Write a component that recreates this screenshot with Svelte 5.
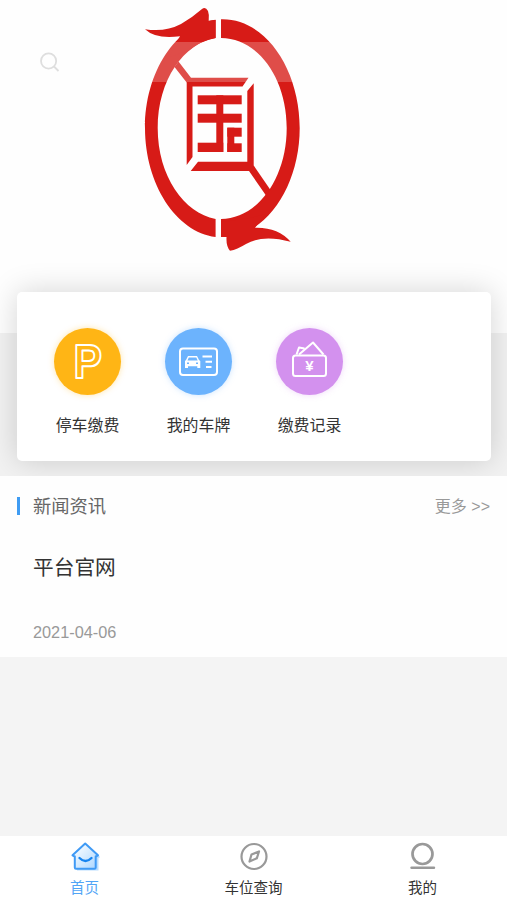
<script lang="ts">
  type Entry = { id: string; label: string; color: string };

  const entries: Entry[] = [
    { id: 'pay', label: '停车缴费', color: '#ffb515' },
    { id: 'plate', label: '我的车牌', color: '#6cb3fd' },
    { id: 'record', label: '缴费记录', color: '#d391ee' },
  ];

  const news = [{ title: '平台官网', date: '2021-04-06' }];

  const tabs = [
    { id: 'home', label: '首页' },
    { id: 'search', label: '车位查询' },
    { id: 'mine', label: '我的' },
  ];

  let active = $state('home');
</script>

<div class="page">
  <header class="banner">
    <svg class="logo" viewBox="140 0 165 260" width="165" height="260" fill="#d71b17">
      <!-- ring, split by a narrow gap -->
      <path d="M215.600 19.800C176 25 145 72 145 128S176 232 215.600 237V219C184 213 157.700 176 157.700 128S184 43 215.600 38Z" />
      <path d="M221 19.300C266 18 299.700 70 299.700 128S266 238 221 237V219C257 219 286.700 179 286.700 128S257 38 221 38Z" />
      <!-- head and tail -->
      <path d="M145 29.200Q165 32.500 181 24Q193 17 202 9Q205.500 6.500 208 11Q209.500 15 208.700 20.800L215.600 20V38Q200 41 188 51L169 57L180 36.200Q156 39.500 145 29.200Z" />
      <path d="M221 222L250 218L266 214L255 227.700Q278 227 290.700 241.800Q263 234 246 244Q237 249.500 230 250.800Q226 246 226.500 237H221Z" />
      <!-- frame -->
      <path d="M178.500 61.500L191 77.700H248.500L242.500 86.500H192.500V157L186.700 165V82.500L174.500 67Z" />
      <path d="M253.700 83.300V165.500L270.500 190L266 195.500L249 171H190.700L198 161.700H247.300V91Z" />
      <!-- inner mark -->
      <rect x="197.700" y="95.300" width="44" height="9" />
      <rect x="197.700" y="113.700" width="44" height="9" />
      <rect x="216.300" y="95.300" width="7" height="56.700" />
      <rect x="197.700" y="142.700" width="25.600" height="9.300" />
      <rect x="227.300" y="127.700" width="7" height="24.300" />
      <rect x="227.300" y="127.700" width="14.400" height="9" />
      <rect x="227.300" y="143.300" width="14.400" height="8.700" />
    </svg>
    <div class="search">
      <svg viewBox="0 0 20 20" width="20" height="20" fill="none" stroke="#dedede" stroke-width="1.800">
        <circle cx="8.600" cy="9" r="7.600" />
        <path d="M14 14.500L18.500 19" />
      </svg>
    </div>
  </header>

  <section class="services">
    <div class="card">
      {#each entries as entry}
        <div class="entry">
          <div class="disc {entry.id}" style="background: {entry.color}">
            <svg viewBox="0 0 67 67" width="67" height="67" fill="none" stroke="#fff" stroke-width="2" stroke-linejoin="round">
              {#if entry.id === 'pay'}
                <text class="parking" x="19.500" y="50.300" textLength="28.500" lengthAdjust="spacingAndGlyphs">P</text>
              {:else if entry.id === 'plate'}
                <rect x="15" y="20.500" width="37" height="26.500" rx="3" />
                <path fill="#fff" stroke="none" fill-rule="evenodd" d="M23 28H32L34 32L35.300 33V40H32.300V38.300H23V40H20V33L21 32ZM23.800 29.500L22.500 32.500H32.700L31.300 29.500ZM22 34.500V36H24V34.500ZM31 34.500V36H33V34.500Z" />
                <path d="M37.500 28.500H47M40.500 33.800H47M41 39H46.500" />
              {:else}
                <rect x="17" y="27.500" width="33" height="20.500" rx="2.500" />
                <path d="M23 26.500L37 14.500L47.500 26.500M20.500 26.500L23 19.500L28.500 20.500" />
                <text class="yen" x="33.500" y="42.500">¥</text>
              {/if}
            </svg>
          </div>
          <span class="entry-label">{entry.label}</span>
        </div>
      {/each}
    </div>
  </section>

  <section class="news">
    <div class="news-head">
      <h2>新闻资讯</h2>
      <span class="more">更多 &gt;&gt;</span>
    </div>
    {#each news as item}
      <article>
        <h3>{item.title}</h3>
        <time>{item.date}</time>
      </article>
    {/each}
  </section>

  <nav class="tabbar">
    {#each tabs as tab}
      <button class:active={active === tab.id} onclick={() => (active = tab.id)}>
        <svg viewBox="0 0 30 30" width="30" height="30" fill="none" stroke="#999" stroke-width="2.200" stroke-linejoin="round" stroke-linecap="round">
          {#if tab.id === 'home'}
            <path d="M6 14.500L17 6L29.500 15V17H28.500V29.500H7Z" fill="#b9ddff" stroke="none" />
            <path d="M15.200 2.500L2.500 14.300L4.800 15.500V26.500Q4.800 27.800 6 27.800H24.500Q25.700 27.800 25.700 26.500V15.500L28 14.300Z" fill="url(#roof)" stroke="#3f9af5" stroke-width="2" />
            <path d="M9.500 17Q15.500 23 21.500 17" stroke="#1684f0" stroke-width="2.400" />
            <defs>
              <linearGradient id="roof" x1="0" y1="0" x2="1" y2="1">
                <stop offset="0.200" stop-color="#f2f9ff" />
                <stop offset="1" stop-color="#a9d5ff" />
              </linearGradient>
            </defs>
          {:else if tab.id === 'search'}
            <circle cx="15" cy="15.500" r="12.500" />
            <path d="M20 10.500L17.800 17.300L10.500 20.500L12.500 13.500Z" />
          {:else}
            <circle cx="14.500" cy="13" r="10" stroke-width="2.700" />
            <path d="M3.500 26.700H26" stroke-width="2.400" />
          {/if}
        </svg>
        <span>{tab.label}</span>
      </button>
    {/each}
  </nav>
</div>

<style>
  :global(body) {
    margin: 0;
    background: #f4f4f4;
  }

  .page {
    display: flex;
    flex-direction: column;
    height: 900px;
    overflow: hidden;
    background: #f4f4f4;
    font-family: 'Liberation Sans', 'Noto Sans CJK SC', sans-serif;
    color: #333;
  }

  .banner {
    position: relative;
    flex: none;
    height: 333px;
    background: #fefefe;
  }

  .logo {
    display: block;
    margin-left: 140px;
  }

  .search {
    position: absolute;
    top: 42px;
    left: 25px;
    right: 25px;
    height: 40px;
    box-sizing: border-box;
    display: flex;
    align-items: center;
    padding-left: 15px;
    border-radius: 20px;
    background: rgba(255, 255, 255, 0.22);
  }

  .services {
    flex: none;
    height: 143px;
    padding: 0 16.5px 0 17px;
    background: #f2f2f2;
  }

  .card {
    position: relative;
    display: flex;
    height: 169px;
    margin-top: -41px;
    padding: 36px 15px 0;
    box-sizing: border-box;
    border-radius: 5px;
    background: #fff;
    box-shadow: 0 0 30px rgba(0, 0, 0, 0.17);
  }

  .entry {
    width: 111px;
    display: flex;
    flex-direction: column;
    align-items: center;
  }

  .disc {
    width: 67px;
    height: 67px;
    border-radius: 50%;
  }

  .disc svg {
    display: block;
  }

  .pay {
    box-shadow: 0 0 6px rgba(255, 181, 21, 0.35);
  }

  .plate {
    box-shadow: 0 0 6px rgba(108, 179, 253, 0.35);
  }

  .record {
    box-shadow: 0 0 6px rgba(211, 145, 238, 0.35);
  }

  .parking {
    font: bold 48px 'Liberation Sans', sans-serif;
  }

  .yen {
    font: bold 15px 'Liberation Sans', sans-serif;
    fill: #fff;
    stroke: none;
    text-anchor: middle;
  }

  .entry-label {
    margin-top: 19px;
    font-size: 15.9px;
    line-height: 24px;
  }

  .news {
    flex: none;
    height: 181px;
    box-sizing: border-box;
    padding: 21px 17px 0;
    position: relative;
    background: #fefefe;
  }

  .news-head {
    display: flex;
    align-items: center;
    justify-content: space-between;
    height: 18px;
    padding-left: 13px;
    border-left: 3px solid #3f9cf3;
  }

  h2 {
    margin: -2px 0 0;
    font-size: 18.3px;
    font-weight: 400;
    color: #666;
  }

  .more {
    margin-top: -2px;
    font-size: 16px;
    color: #999;
  }

  article {
    display: flex;
    flex-direction: column;
    padding: 38px 16px 0;
  }

  h3 {
    margin: 0;
    font-size: 20.7px;
    font-weight: 400;
    line-height: 30px;
  }

  time {
    margin-top: 39px;
    font-size: 16.3px;
    line-height: 20px;
    color: #999;
  }

  .tabbar {
    flex: none;
    display: flex;
    height: 64px;
    margin-top: auto;
    background: #fff;
  }

  .tabbar button {
    flex: 1;
    display: flex;
    flex-direction: column;
    align-items: center;
    padding: 5px 0 0;
    border: 0;
    background: none;
    font-family: inherit;
    font-size: 14.5px;
    line-height: 20px;
    color: #333;
  }

  .tabbar span {
    margin-top: 7px;
  }

  .tabbar .active {
    color: #51a5f6;
  }
</style>
